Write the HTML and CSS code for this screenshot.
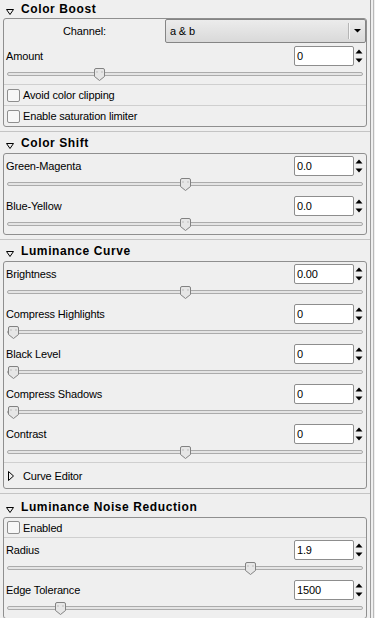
FILE: index.html
```html
<!DOCTYPE html>
<html lang="en">
<head>
    <meta charset="UTF-8">
    <meta name="viewport" content="width=device-width, initial-scale=1.0">
    <title>Color Tools</title>
    <link rel="stylesheet" href="styles.css">
</head>
<body>
<div class="app">
<div class="panel">

    <!-- Color Boost -->
    <div class="tool-head first">
        <svg class="expander" width="8" height="6" viewBox="0 0 8 6"><polygon points="0.5,0.5 7.5,0.5 4,5.5" fill="none" stroke="#000"/></svg>
        <span class="tool-title">Color Boost</span>
    </div>
    <div class="frame">
        <div class="combo-row">
            <span class="combo-label">Channel:</span>
            <div class="combo">
                <span class="combo-text">a &amp; b</span>
                <span class="combo-btn"><svg width="7" height="4" viewBox="0 0 7 4"><polygon points="0,0 7,0 3.5,3.5" fill="#000"/></svg></span>
            </div>
        </div>
        <div class="param">
            <div class="param-row">
                <span class="param-label">Amount</span>
                <div class="entry">0</div>
                <svg class="spin" width="10" height="20" viewBox="0 0 10 20"><polygon points="1.5,7.5 8.5,7.5 5,3.5" fill="#000"/><polygon points="1.5,12.5 8.5,12.5 5,16.5" fill="#000"/></svg>
            </div>
            <div class="slider"><div class="track"><svg class="thumb" style="--v:0.252" width="11" height="13" viewBox="0 0 11 13"><path d="M0.5 2 Q0.5 0.5 2 0.5 H9 Q10.5 0.5 10.5 2 V8.5 L5.5 12.5 L0.5 8.5 Z" fill="#e6e6e6" stroke="#828282"/><path d="M3 3 V5 M8 3 V5" stroke="#bdbdbd"/></svg></div></div>
        </div>
        <div class="check-row divided">
            <span class="checkbox"></span>
            <span>Avoid color clipping</span>
        </div>
        <div class="check-row divided">
            <span class="checkbox"></span>
            <span>Enable saturation limiter</span>
        </div>
    </div>
    <div class="tool-sep"></div>

    <!-- Color Shift -->
    <div class="tool-head">
        <svg class="expander" width="8" height="6" viewBox="0 0 8 6"><polygon points="0.5,0.5 7.5,0.5 4,5.5" fill="none" stroke="#000"/></svg>
        <span class="tool-title">Color Shift</span>
    </div>
    <div class="frame">
        <div class="param">
            <div class="param-row">
                <span class="param-label">Green-Magenta</span>
                <div class="entry">0.0</div>
                <svg class="spin" width="10" height="20" viewBox="0 0 10 20"><polygon points="1.5,7.5 8.5,7.5 5,3.5" fill="#000"/><polygon points="1.5,12.5 8.5,12.5 5,16.5" fill="#000"/></svg>
            </div>
            <div class="slider"><div class="track"><svg class="thumb" style="--v:0.5" width="11" height="13" viewBox="0 0 11 13"><path d="M0.5 2 Q0.5 0.5 2 0.5 H9 Q10.5 0.5 10.5 2 V8.5 L5.5 12.5 L0.5 8.5 Z" fill="#e6e6e6" stroke="#828282"/><path d="M3 3 V5 M8 3 V5" stroke="#bdbdbd"/></svg></div></div>
        </div>
        <div class="param">
            <div class="param-row">
                <span class="param-label">Blue-Yellow</span>
                <div class="entry">0.0</div>
                <svg class="spin" width="10" height="20" viewBox="0 0 10 20"><polygon points="1.5,7.5 8.5,7.5 5,3.5" fill="#000"/><polygon points="1.5,12.5 8.5,12.5 5,16.5" fill="#000"/></svg>
            </div>
            <div class="slider"><div class="track"><svg class="thumb" style="--v:0.5" width="11" height="13" viewBox="0 0 11 13"><path d="M0.5 2 Q0.5 0.5 2 0.5 H9 Q10.5 0.5 10.5 2 V8.5 L5.5 12.5 L0.5 8.5 Z" fill="#e6e6e6" stroke="#828282"/><path d="M3 3 V5 M8 3 V5" stroke="#bdbdbd"/></svg></div></div>
        </div>
    </div>
    <div class="tool-sep"></div>

    <!-- Luminance Curve -->
    <div class="tool-head">
        <svg class="expander" width="8" height="6" viewBox="0 0 8 6"><polygon points="0.5,0.5 7.5,0.5 4,5.5" fill="none" stroke="#000"/></svg>
        <span class="tool-title">Luminance Curve</span>
    </div>
    <div class="frame">
        <div class="param">
            <div class="param-row">
                <span class="param-label">Brightness</span>
                <div class="entry">0.00</div>
                <svg class="spin" width="10" height="20" viewBox="0 0 10 20"><polygon points="1.5,7.5 8.5,7.5 5,3.5" fill="#000"/><polygon points="1.5,12.5 8.5,12.5 5,16.5" fill="#000"/></svg>
            </div>
            <div class="slider"><div class="track"><svg class="thumb" style="--v:0.5" width="11" height="13" viewBox="0 0 11 13"><path d="M0.5 2 Q0.5 0.5 2 0.5 H9 Q10.5 0.5 10.5 2 V8.5 L5.5 12.5 L0.5 8.5 Z" fill="#e6e6e6" stroke="#828282"/><path d="M3 3 V5 M8 3 V5" stroke="#bdbdbd"/></svg></div></div>
        </div>
        <div class="param">
            <div class="param-row">
                <span class="param-label">Compress Highlights</span>
                <div class="entry">0</div>
                <svg class="spin" width="10" height="20" viewBox="0 0 10 20"><polygon points="1.5,7.5 8.5,7.5 5,3.5" fill="#000"/><polygon points="1.5,12.5 8.5,12.5 5,16.5" fill="#000"/></svg>
            </div>
            <div class="slider"><div class="track"><svg class="thumb" style="--v:0" width="11" height="13" viewBox="0 0 11 13"><path d="M0.5 2 Q0.5 0.5 2 0.5 H9 Q10.5 0.5 10.5 2 V8.5 L5.5 12.5 L0.5 8.5 Z" fill="#e6e6e6" stroke="#828282"/><path d="M3 3 V5 M8 3 V5" stroke="#bdbdbd"/></svg></div></div>
        </div>
        <div class="param">
            <div class="param-row">
                <span class="param-label">Black Level</span>
                <div class="entry">0</div>
                <svg class="spin" width="10" height="20" viewBox="0 0 10 20"><polygon points="1.5,7.5 8.5,7.5 5,3.5" fill="#000"/><polygon points="1.5,12.5 8.5,12.5 5,16.5" fill="#000"/></svg>
            </div>
            <div class="slider"><div class="track"><svg class="thumb" style="--v:0" width="11" height="13" viewBox="0 0 11 13"><path d="M0.5 2 Q0.5 0.5 2 0.5 H9 Q10.5 0.5 10.5 2 V8.5 L5.5 12.5 L0.5 8.5 Z" fill="#e6e6e6" stroke="#828282"/><path d="M3 3 V5 M8 3 V5" stroke="#bdbdbd"/></svg></div></div>
        </div>
        <div class="param">
            <div class="param-row">
                <span class="param-label">Compress Shadows</span>
                <div class="entry">0</div>
                <svg class="spin" width="10" height="20" viewBox="0 0 10 20"><polygon points="1.5,7.5 8.5,7.5 5,3.5" fill="#000"/><polygon points="1.5,12.5 8.5,12.5 5,16.5" fill="#000"/></svg>
            </div>
            <div class="slider"><div class="track"><svg class="thumb" style="--v:0" width="11" height="13" viewBox="0 0 11 13"><path d="M0.5 2 Q0.5 0.5 2 0.5 H9 Q10.5 0.5 10.5 2 V8.5 L5.5 12.5 L0.5 8.5 Z" fill="#e6e6e6" stroke="#828282"/><path d="M3 3 V5 M8 3 V5" stroke="#bdbdbd"/></svg></div></div>
        </div>
        <div class="param">
            <div class="param-row">
                <span class="param-label">Contrast</span>
                <div class="entry">0</div>
                <svg class="spin" width="10" height="20" viewBox="0 0 10 20"><polygon points="1.5,7.5 8.5,7.5 5,3.5" fill="#000"/><polygon points="1.5,12.5 8.5,12.5 5,16.5" fill="#000"/></svg>
            </div>
            <div class="slider"><div class="track"><svg class="thumb" style="--v:0.5" width="11" height="13" viewBox="0 0 11 13"><path d="M0.5 2 Q0.5 0.5 2 0.5 H9 Q10.5 0.5 10.5 2 V8.5 L5.5 12.5 L0.5 8.5 Z" fill="#e6e6e6" stroke="#828282"/><path d="M3 3 V5 M8 3 V5" stroke="#bdbdbd"/></svg></div></div>
        </div>
        <div class="sub-head divided">
            <svg class="collapsed" width="6" height="10" viewBox="0 0 6 10"><polygon points="0.5,0.5 5.5,5 0.5,9.5" fill="none" stroke="#000"/></svg>
            <span>Curve Editor</span>
        </div>
    </div>
    <div class="tool-sep loose"></div>

    <!-- Luminance Noise Reduction -->
    <div class="tool-head">
        <svg class="expander" width="8" height="6" viewBox="0 0 8 6"><polygon points="0.5,0.5 7.5,0.5 4,5.5" fill="none" stroke="#000"/></svg>
        <span class="tool-title">Luminance Noise Reduction</span>
    </div>
    <div class="frame">
        <div class="check-row short">
            <span class="checkbox"></span>
            <span>Enabled</span>
        </div>
        <div class="param divided">
            <div class="param-row">
                <span class="param-label">Radius</span>
                <div class="entry">1.9</div>
                <svg class="spin" width="10" height="20" viewBox="0 0 10 20"><polygon points="1.5,7.5 8.5,7.5 5,3.5" fill="#000"/><polygon points="1.5,12.5 8.5,12.5 5,16.5" fill="#000"/></svg>
            </div>
            <div class="slider"><div class="track"><svg class="thumb" style="--v:0.69" width="11" height="13" viewBox="0 0 11 13"><path d="M0.5 2 Q0.5 0.5 2 0.5 H9 Q10.5 0.5 10.5 2 V8.5 L5.5 12.5 L0.5 8.5 Z" fill="#e6e6e6" stroke="#828282"/><path d="M3 3 V5 M8 3 V5" stroke="#bdbdbd"/></svg></div></div>
        </div>
        <div class="param">
            <div class="param-row">
                <span class="param-label">Edge Tolerance</span>
                <div class="entry">1500</div>
                <svg class="spin" width="10" height="20" viewBox="0 0 10 20"><polygon points="1.5,7.5 8.5,7.5 5,3.5" fill="#000"/><polygon points="1.5,12.5 8.5,12.5 5,16.5" fill="#000"/></svg>
            </div>
            <div class="slider"><div class="track"><svg class="thumb" style="--v:0.138" width="11" height="13" viewBox="0 0 11 13"><path d="M0.5 2 Q0.5 0.5 2 0.5 H9 Q10.5 0.5 10.5 2 V8.5 L5.5 12.5 L0.5 8.5 Z" fill="#e6e6e6" stroke="#828282"/><path d="M3 3 V5 M8 3 V5" stroke="#bdbdbd"/></svg></div></div>
        </div>
    </div>

</div>
<div class="edge"></div>
</div>
</body>
</html>
```

FILE: styles.css
```css
html, body {
    margin: 0;
    overflow: hidden;
}
body {
    font-family: "Liberation Sans", Arial, sans-serif;
    font-size: 11px;
    letter-spacing: -0.15px;
    color: #000;
    background-color: #efefef;
}
.app {
    display: flex;
    height: 618px;
}
.panel {
    width: 371px;
    box-sizing: border-box;
    border-right: 1px solid #9c9c9c;
}
.edge {
    width: 2px;
    border-right: 1px solid #b9b9b9;
}

/* tool headers */
.tool-head {
    height: 20px;
    display: flex;
    align-items: center;
    padding-left: 6px;
}
.tool-head.first {
    height: 18px;
}
.expander {
    margin-top: 5px;
    margin-right: 7px;
}
.tool-title {
    font-weight: bold;
    font-size: 12px;
    letter-spacing: 0.6px;
}
.tool-sep {
    margin: 4px 0 1px;
    border-top: 1px solid #c4c4c4;
}
.tool-sep.loose {
    margin-bottom: 3px;
}

/* frame around a tool */
.frame {
    margin: 0 3px;
    border: 1px solid #8f8f8f;
    border-radius: 3px;
}
.divided {
    border-top: 1px solid #cfcfcf;
}

/* channel combo */
.combo-row {
    display: flex;
    height: 25px;
}
.combo-label {
    flex: 1;
    text-align: center;
    line-height: 24px;
}
.combo {
    width: 201px;
    height: 24px;
    box-sizing: border-box;
    display: flex;
    align-items: center;
    border: 1px solid #858585;
    border-radius: 2px;
    background: linear-gradient(#ececec, #d9d9d9);
}
.combo-text {
    flex: 1;
    padding-left: 4px;
}
.combo-btn {
    width: 16px;
    height: 16px;
    display: flex;
    align-items: center;
    justify-content: center;
    border-left: 1px solid #b5b5b5;
    box-shadow: inset 1px 0 #f6f6f6;
}

/* adjusters */
.param {
    padding-top: 2px;
}
.param-row {
    display: flex;
    align-items: center;
    height: 20px;
    padding: 0 2px;
}
.param-label {
    flex: 1;
}
.entry {
    width: 60px;
    height: 20px;
    box-sizing: border-box;
    padding: 0 2px;
    line-height: 18px;
    background-color: #fff;
    border: 1px solid #8d8d8d;
    border-radius: 2px;
}
.spin {
    display: block;
}
.slider {
    height: 18px;
    box-sizing: border-box;
    padding: 6px 3px 0;
}
.track {
    position: relative;
    height: 4px;
    box-sizing: border-box;
    border: 1px solid #ababab;
    border-radius: 2px;
    background-color: #e4e4e4;
}
.thumb {
    position: absolute;
    top: -5px;
    left: calc((100% - 11px) * var(--v));
}

/* checkboxes */
.check-row {
    display: flex;
    align-items: center;
    height: 20px;
    padding-left: 3px;
}
.check-row.short {
    height: 19px;
}
.checkbox {
    width: 13px;
    height: 13px;
    box-sizing: border-box;
    margin-right: 3px;
    border: 1px solid #8e8e8e;
    border-radius: 2px;
    background-color: #f7f7f7;
}

/* collapsed sub expander */
.sub-head {
    display: flex;
    align-items: center;
    height: 25px;
    padding-left: 4px;
}
.collapsed {
    margin-right: 9px;
}
```
